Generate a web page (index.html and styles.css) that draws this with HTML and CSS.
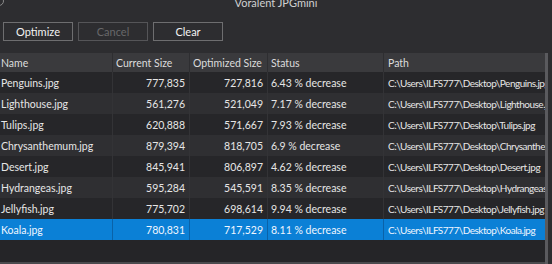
FILE: index.html
```html
<!DOCTYPE html>
<html>
<head>
<meta charset="utf-8">
<link rel="stylesheet" href="styles.css">
</head>
<body>
<div class="window">
  <div class="titlebar">
    <span class="appicon"></span>
    <span class="title">Voralent JPGmini</span>
  </div>
  <div class="toolbar">
    <button class="btn">Optimize</button>
    <button class="btn disabled">Cancel</button>
    <button class="btn">Clear</button>
  </div>
  <div class="gridwrap">
    <div class="grid">
      <div class="row head">
        <div class="cell">Name</div>
        <div class="cell">Current Size</div>
        <div class="cell">Optimized Size</div>
        <div class="cell">Status</div>
        <div class="cell">Path</div>
      </div>
      <div class="row odd">
        <div class="cell">Penguins.jpg</div>
        <div class="cell num">777,835</div>
        <div class="cell num">727,816</div>
        <div class="cell">6.43 % decrease</div>
        <div class="cell path">C:\Users\ILFS777\Desktop\Penguins.jpg</div>
      </div>
      <div class="row even">
        <div class="cell">Lighthouse.jpg</div>
        <div class="cell num">561,276</div>
        <div class="cell num">521,049</div>
        <div class="cell">7.17 % decrease</div>
        <div class="cell path">C:\Users\ILFS777\Desktop\Lighthouse.jpg</div>
      </div>
      <div class="row odd">
        <div class="cell">Tulips.jpg</div>
        <div class="cell num">620,888</div>
        <div class="cell num">571,667</div>
        <div class="cell">7.93 % decrease</div>
        <div class="cell path">C:\Users\ILFS777\Desktop\Tulips.jpg</div>
      </div>
      <div class="row even">
        <div class="cell">Chrysanthemum.jpg</div>
        <div class="cell num">879,394</div>
        <div class="cell num">818,705</div>
        <div class="cell">6.9 % decrease</div>
        <div class="cell path">C:\Users\ILFS777\Desktop\Chrysanthemum.jpg</div>
      </div>
      <div class="row odd">
        <div class="cell">Desert.jpg</div>
        <div class="cell num">845,941</div>
        <div class="cell num">806,897</div>
        <div class="cell">4.62 % decrease</div>
        <div class="cell path">C:\Users\ILFS777\Desktop\Desert.jpg</div>
      </div>
      <div class="row even">
        <div class="cell">Hydrangeas.jpg</div>
        <div class="cell num">595,284</div>
        <div class="cell num">545,591</div>
        <div class="cell">8.35 % decrease</div>
        <div class="cell path">C:\Users\ILFS777\Desktop\Hydrangeas.jpg</div>
      </div>
      <div class="row odd">
        <div class="cell">Jellyfish.jpg</div>
        <div class="cell num">775,702</div>
        <div class="cell num">698,614</div>
        <div class="cell">9.94 % decrease</div>
        <div class="cell path">C:\Users\ILFS777\Desktop\Jellyfish.jpg</div>
      </div>
      <div class="row selected">
        <div class="cell">Koala.jpg</div>
        <div class="cell num">780,831</div>
        <div class="cell num">717,529</div>
        <div class="cell">8.11 % decrease</div>
        <div class="cell path">C:\Users\ILFS777\Desktop\Koala.jpg</div>
      </div>
      <div class="filler"></div>
    </div>
    <div class="edge"></div>
  </div>
</div>
</body>
</html>
```

FILE: styles.css
```css
* { box-sizing: border-box; }
html, body {
  margin: 0;
  padding: 0;
  width: 552px;
  height: 264px;
  overflow: hidden;
  background: #2d2d30;
}
.window {
  width: 552px;
  height: 264px;
  display: flex;
  flex-direction: column;
  font-family: "Lato", "Open Sans", sans-serif;
  color: #e6e6e6;
  background: #2d2d30;
}
.titlebar {
  height: 9px;
  position: relative;
  overflow: hidden;
  display: flex;
  justify-content: center;
}
.appicon {
  position: absolute;
  left: -6px;
  top: -4px;
  width: 10px;
  height: 10px;
  border: 1px solid #8a8a8a;
  border-radius: 50%;
}
.title {
  font-size: 11px;
  line-height: 5px;
  color: #d0d0d0;
}
.toolbar {
  display: flex;
  gap: 5px;
  padding: 13px 0 0 3px;
  height: 44px;
}
.btn {
  width: 70px;
  height: 19px;
  background: #2d2d30;
  border: 1px solid #6e6e70;
  color: #f2f2f2;
  font-family: "Lato", "Open Sans", sans-serif;
  font-size: 11px;
  padding: 0;
  line-height: 16px;
}
.btn.disabled {
  color: #68686a;
  border-color: #555558;
}
.gridwrap {
  display: flex;
  height: 211px;
}
.grid {
  width: 545px;
  display: flex;
  flex-direction: column;
  background: #252528;
}
.edge {
  width: 7px;
  background: linear-gradient(to right, #5a5a5e 0, #5a5a5e 3px, #2d2d30 3px);
}
.row {
  display: grid;
  grid-template-columns: 113px 77px 78px 116px 161px;
  height: 21px;
  font-size: 10.5px;
  white-space: nowrap;
}
.row.head {
  height: 19px;
  background: #3a3a3d;
  color: #dcdcdc;
}
.row.odd { background: #262629; }
.row.even { background: #2f2f32; }
.row.selected { background: #0b80d6; color: #f0f6ff; }
.cell {
  overflow: hidden;
  padding: 0 3px 0 2px;
  display: flex;
  align-items: center;
  border-right: 1px solid #333336;
}
.head .cell {
  border-right: 1px solid #2e2e31;
  padding-left: 3px;
}
.head .cell:first-child { padding-left: 1px; }
.row .cell:first-child { padding-left: 1px; }
.row .cell:last-child { border-right: none; padding-left: 4px; }
.row .cell:nth-child(4) { padding-left: 3px; }
.selected .cell { border-right-color: #0a62a8; }
.selected .cell:last-child { border-right: none; }
.path {
  font-size: 10px;
  letter-spacing: -0.5px;
}
.num {
  justify-content: flex-end;
  padding-right: 4px;
}
.filler {
  flex: 1;
  border-bottom: 2px solid #4a4a4d;
}
```
